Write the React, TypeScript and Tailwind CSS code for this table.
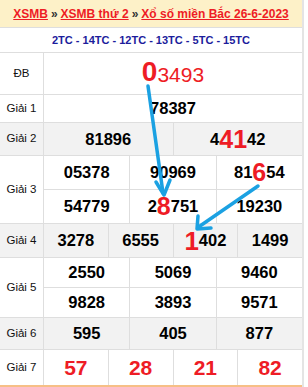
import type { ReactNode } from 'react';

// ── Data ─────────────────────────────────────────────────────────────────────

type Num = ReactNode;

const hl = (s: string, size = 'text-[25px]') => (
  <span className={`${size} leading-none text-[#ee1c25]`}>{s}</span>
);

// ── Cells ────────────────────────────────────────────────────────────────────

function Cell({ children, last }: { children: Num; last?: boolean }) {
  return (
    <div
      className={`flex flex-1 items-center justify-center text-[16.5px] font-bold text-black ${
        last ? '' : 'border-r border-[#dedede]'
      }`}
    >
      {children}
    </div>
  );
}

function Line({ items, h, border }: { items: Num[]; h: string; border?: boolean }) {
  return (
    <div className={`flex ${h} ${border ? 'border-b border-[#dedede]' : ''}`}>
      {items.map((n, i) => (
        <Cell key={i} last={i === items.length - 1}>
          {n}
        </Cell>
      ))}
    </div>
  );
}

function Row({
  label,
  gray,
  h,
  children,
}: {
  label: string;
  gray?: boolean;
  h: string;
  children: ReactNode;
}) {
  return (
    <div className={`flex ${h} border-b border-[#dedede] ${gray ? 'bg-[#f2f2f2]' : 'bg-white'}`}>
      <div className="flex w-[44px] shrink-0 items-center justify-center border-r border-[#dedede] text-[11.5px] text-[#111]">
        {label}
      </div>
      <div className="flex flex-1 flex-col">{children}</div>
    </div>
  );
}

// ── App ──────────────────────────────────────────────────────────────────────

export default function App() {
  return (
    <div className="h-[387px] w-[308px] bg-white" style={{ fontFamily: '"Liberation Sans", Arial, sans-serif' }}>
      <div className="relative w-[304px] border-r-2 border-[#e4e4e4]">
        {/* title bar */}
        <div className="flex h-[28px] items-center justify-center border-b border-[#dedede] bg-[#fdf1c8] pt-[1px] text-[12px] font-bold">
          <span className="text-[#ee1c25] underline">XSMB</span>
          <span className="mx-[3px] text-[#333]">»</span>
          <span className="text-[#ee1c25] underline">XSMB thứ 2</span>
          <span className="mx-[3px] text-[#333]">»</span>
          <span className="text-[#ee1c25] underline">Xổ số miền Bắc 26-6-2023</span>
        </div>

        {/* codes */}
        <div className="flex h-[25px] items-center justify-center border-b border-[#dedede] text-[11px] font-bold text-[#1c1c9c]">
          2TC - 14TC - 12TC - 13TC - 5TC - 15TC
        </div>

        <Row label="ĐB" h="h-[42px]">
          <div className="flex flex-1 items-center justify-center pb-[4px] text-[#ee1c25]">
            <span className="text-[28px] font-bold leading-none">0</span>
            <span className="mt-[5px] text-[21px] leading-none">3493</span>
          </div>
        </Row>

        <Row label="Giải 1" h="h-[28px]">
          <Line h="h-full" items={['78387']} />
        </Row>

        <Row label="Giải 2" gray h="h-[33px]">
          <Line
            h="h-full"
            items={[
              '81896',
              <>
                4{hl('41')}42
              </>,
            ]}
          />
        </Row>

        <Row label="Giải 3" h="h-[68px]">
          <Line
            h="h-[34px]"
            border
            items={[
              '05378',
              '90969',
              <>
                81{hl('6')}54
              </>,
            ]}
          />
          <Line
            h="h-[33px]"
            items={[
              '54779',
              <>
                2{hl('8')}751
              </>,
              '19230',
            ]}
          />
        </Row>

        <Row label="Giải 4" gray h="h-[34px]">
          <Line
            h="h-full"
            items={[
              '3278',
              '6555',
              <>
                {hl('1', 'text-[26px]')}402
              </>,
              '1499',
            ]}
          />
        </Row>

        <Row label="Giải 5" h="h-[60px]">
          <Line h="h-[30px]" border items={['2550', '5069', '9460']} />
          <Line h="h-[29px]" items={['9828', '3893', '9571']} />
        </Row>

        <Row label="Giải 6" gray h="h-[32px]">
          <Line h="h-full" items={['595', '405', '877']} />
        </Row>

        <div className="flex h-[37px] border-b-2 border-[#f6bf86] bg-white">
          <div className="flex w-[44px] shrink-0 items-center justify-center border-r border-[#dedede] text-[11.5px] text-[#111]">
            Giải 7
          </div>
          <div className="flex flex-1">
            {['57', '28', '21', '82'].map((n, i) => (
              <div
                key={n}
                className={`flex flex-1 items-center justify-center text-[21px] font-bold text-[#ee1c25] ${
                  i < 3 ? 'border-r border-[#dedede]' : ''
                }`}
              >
                {n}
              </div>
            ))}
          </div>
        </div>

        {/* arrows overlay */}
        <svg className="pointer-events-none absolute left-0 top-0" width="304" height="387">
          <g stroke="#1ba1e2" strokeWidth="3.5" strokeLinecap="round" strokeLinejoin="round" fill="none">
            <line x1="148" y1="86" x2="163" y2="193" />
            <polyline points="156,182 164,195 170,180" />
            <line x1="258" y1="186" x2="200" y2="226" />
            <polyline points="198,216 197,229 211,228" />
          </g>
        </svg>
      </div>
    </div>
  );
}
